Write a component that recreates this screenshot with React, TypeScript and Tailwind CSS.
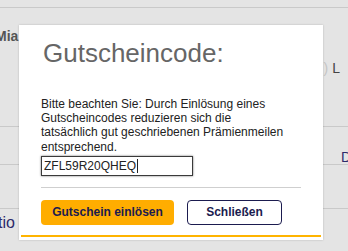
import React from 'react';

const font = { fontFamily: '"Liberation Sans", Arial, sans-serif' };

const Backdrop = () => (
  <div className="flex flex-col w-full h-full">
    <div className="h-[7px]" />
    <div className="border-t border-[#c9c9c9] h-[119px] flex justify-between">
      <div className="-ml-[5px] mt-[20px] text-[14px] font-bold text-[#555] leading-[16px]">Mia</div>
      <div className="flex items-start mt-[52px] mr-[8px] gap-[4px]">
        <span className="text-[14px] text-[#c4c4c4] leading-[16px]">)</span>
        <span className="text-[14px] text-[#444] leading-[16px]">L</span>
      </div>
    </div>
    <div className="border-t border-[#c9c9c9] h-[38px] flex justify-end">
      <span className="mt-[22px] -mr-[3px] text-[14px] text-[#2d2a6b] leading-[16px]">D</span>
    </div>
    <div className="border-t border-[#c9c9c9] h-[44px]" />
    <div className="border-t border-[#c9c9c9] flex-1">
      <span className="block -ml-[2px] mt-[5px] text-[16px] text-[#2d2a6b] leading-[18px]">tio</span>
    </div>
  </div>
);

export default function App() {
  return (
    <div className="relative w-[348px] h-[251px] overflow-hidden bg-[#e4e4e4]" style={font}>
      <Backdrop />
      <div className="absolute left-[19px] top-[25px] w-[304px] h-[215px] bg-white shadow-[0_0_2px_rgba(0,0,0,0.2)] flex flex-col">
        <div className="px-[22px] flex-1">
          <h2 className="mt-[15px] text-[26px] leading-[26px] text-[#666] pl-[2px]">Gutscheincode:</h2>
          <p className="mt-[31px] w-[248px] text-[12px] leading-[14.2px] text-[#222]">
            Bitte beachten Sie: Durch Einlösung eines Gutscheincodes reduzieren sich die tatsächlich gut geschriebenen Prämienmeilen entsprechend.
          </p>
          <div className="mt-[2px] w-[152px] h-[20px] border border-[#3a3a3a] shadow-[0_0_2px_rgba(0,0,0,0.55)] flex items-center px-[2px] text-[12px] text-[#222]">
            ZFL59R20QHEQ<span className="ml-[1px] w-px h-[14px] bg-[#222]" />
          </div>
          <div className="mt-[11px] border-t border-[#cfcfcf]" />
          <div className="mt-[12px] flex gap-[13px]">
            <button className="w-[133px] h-[25px] rounded-[4px] bg-[#ffad00] text-[12px] font-bold text-[#1b1b4f]">
              Gutschein einlösen
            </button>
            <button className="w-[95px] h-[25px] rounded-[4px] border border-[#1b1b4f] bg-white text-[12px] font-bold text-[#1b1b4f]">
              Schließen
            </button>
          </div>
        </div>
        <div className="mx-[2px] mb-[3px] h-[2px] bg-[#ffb400]" />
      </div>
    </div>
  );
}
